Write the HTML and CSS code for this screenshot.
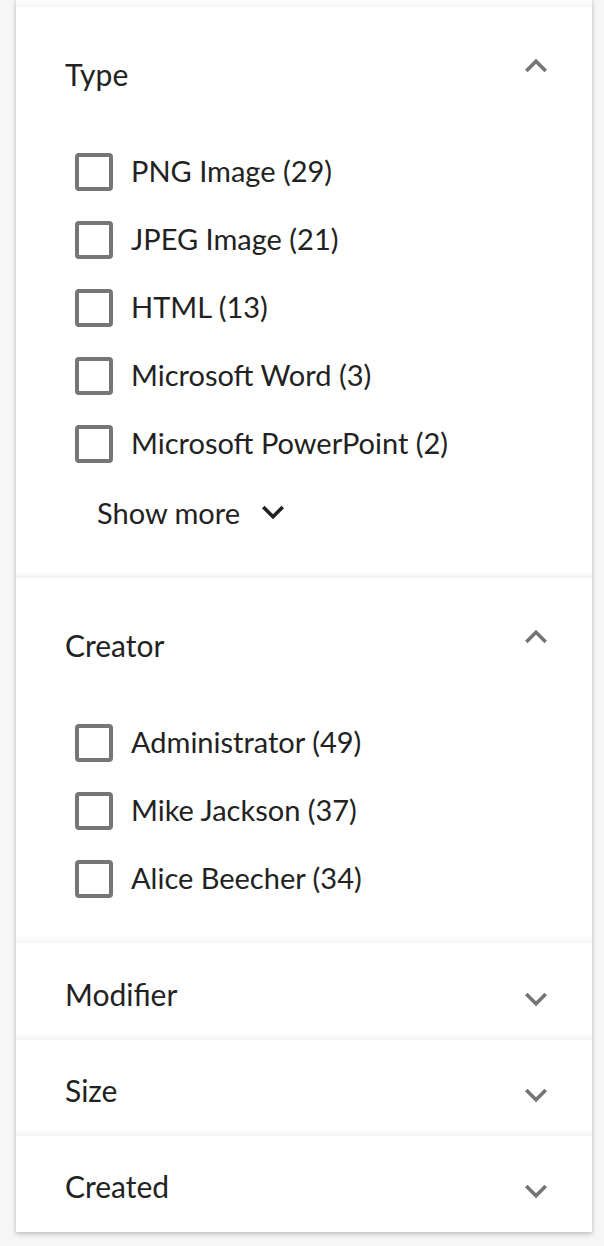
FILE: index.html
```html
<!DOCTYPE html>
<html lang="en">
<head>
<meta charset="utf-8">
<title>Filters</title>
<link rel="stylesheet" href="styles.css">
</head>
<body>
<div class="card">
  <div class="strip"></div>

  <section class="facet facet-open">
    <div class="facet-head">
      <span class="facet-title">Type</span>
      <svg class="chev" viewBox="0 0 24 24" width="44" height="44"><path d="M12 8l-6 6 1.41 1.41L12 10.83l4.59 4.58L18 14z"/></svg>
    </div>
    <ul class="opts">
      <li class="opt"><span class="box"></span><span class="lbl">PNG Image (29)</span></li>
      <li class="opt"><span class="box"></span><span class="lbl">JPEG Image (21)</span></li>
      <li class="opt"><span class="box"></span><span class="lbl">HTML (13)</span></li>
      <li class="opt"><span class="box"></span><span class="lbl">Microsoft Word (3)</span></li>
      <li class="opt"><span class="box"></span><span class="lbl">Microsoft PowerPoint (2)</span></li>
    </ul>
    <div class="more">
      <span class="more-txt">Show more</span>
      <svg class="more-chev" viewBox="0 0 24 24" width="44" height="44"><path d="M16.59 8.59L12 13.17 7.41 8.59 6 10l6 6 6-6z"/></svg>
    </div>
  </section>

  <section class="facet facet-open facet-creator">
    <div class="facet-head">
      <span class="facet-title">Creator</span>
      <svg class="chev" viewBox="0 0 24 24" width="44" height="44"><path d="M12 8l-6 6 1.41 1.41L12 10.83l4.59 4.58L18 14z"/></svg>
    </div>
    <ul class="opts">
      <li class="opt"><span class="box"></span><span class="lbl">Administrator (49)</span></li>
      <li class="opt"><span class="box"></span><span class="lbl">Mike Jackson (37)</span></li>
      <li class="opt"><span class="box"></span><span class="lbl">Alice Beecher (34)</span></li>
    </ul>
  </section>

  <section class="facet facet-closed facet-tall">
    <div class="facet-head">
      <span class="facet-title">Modifier</span>
      <svg class="chev" viewBox="0 0 24 24" width="44" height="44"><path d="M16.59 8.59L12 13.17 7.41 8.59 6 10l6 6 6-6z"/></svg>
    </div>
  </section>

  <section class="facet facet-closed">
    <div class="facet-head">
      <span class="facet-title">Size</span>
      <svg class="chev" viewBox="0 0 24 24" width="44" height="44"><path d="M16.59 8.59L12 13.17 7.41 8.59 6 10l6 6 6-6z"/></svg>
    </div>
  </section>

  <section class="facet facet-closed facet-last">
    <div class="facet-head">
      <span class="facet-title">Created</span>
      <svg class="chev" viewBox="0 0 24 24" width="44" height="44"><path d="M16.59 8.59L12 13.17 7.41 8.59 6 10l6 6 6-6z"/></svg>
    </div>
  </section>
</div>
</body>
</html>
```

FILE: styles.css
```css
html, body {
  margin: 0;
  padding: 0;
}
body {
  background: #f6f6f6;
  font-family: "Lato", "Noto Sans", sans-serif;
  color: #222;
  height: 1246px;
  overflow: hidden;
}
.card {
  width: 576px;
  margin-left: 16px;
  background: #fff;
  box-shadow: 0 2px 5px rgba(0, 0, 0, 0.22), 0 0 2px rgba(0, 0, 0, 0.08);
}
.strip,
.facet {
  background: linear-gradient(to bottom, #fff calc(100% - 7px), #f3f3f3 100%);
}
.strip {
  height: 7px;
}
.facet-last {
  background: #fff;
}
.facet-head {
  display: flex;
  justify-content: space-between;
  align-items: flex-start;
  padding: 0 34px 0 49px;
  box-sizing: border-box;
}
.facet-title {
  font-size: 30px;
  line-height: 40px;
}
.chev {
  fill: #757575;
  display: block;
}
.facet-open .facet-head {
  height: 131px;
  padding-top: 47px;
}
.facet-open .chev {
  margin-top: -10px;
}
.facet-closed .facet-head {
  height: 96px;
  padding-top: 30px;
}
.facet-tall .facet-head {
  height: 97px;
  padding-top: 31px;
}
.facet-closed .chev {
  margin-top: 3px;
}
.opts {
  list-style: none;
  margin: 0;
  padding: 0 0 0 59px;
}
.opt {
  display: flex;
  align-items: center;
  height: 68px;
}
.box {
  width: 38px;
  height: 38px;
  box-sizing: border-box;
  border: 4px solid #767676;
  border-radius: 4px;
  margin-right: 18px;
  flex: none;
}
.lbl {
  font-size: 29px;
  padding-bottom: 4px;
}
.more {
  display: flex;
  align-items: center;
  height: 68px;
  padding-left: 81px;
  padding-bottom: 32px;
}
.more-txt {
  font-size: 29px;
}
.more-chev {
  fill: #222;
  display: block;
  margin-left: 11px;
}
.facet-creator .opts {
  padding-bottom: 30px;
}
```
